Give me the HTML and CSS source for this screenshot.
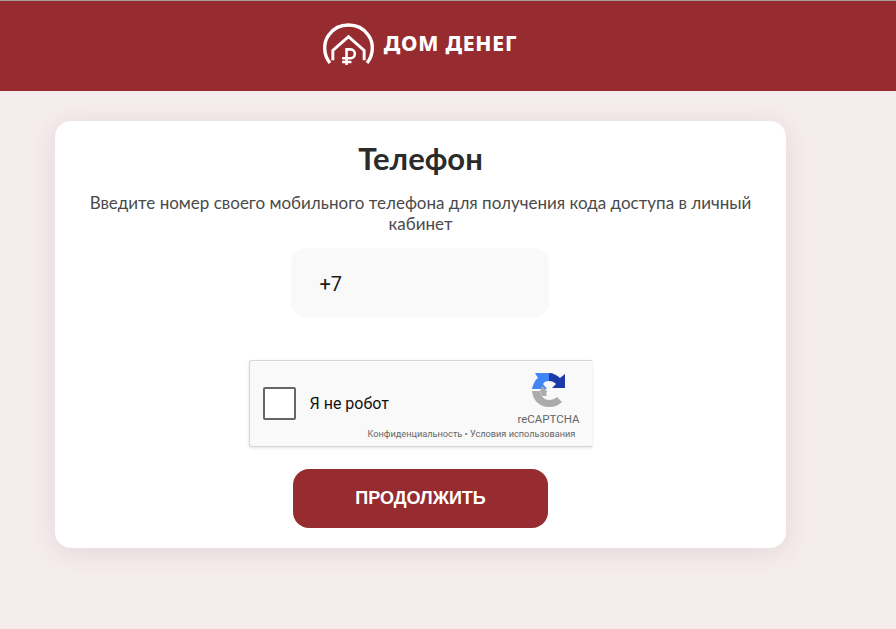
FILE: index.html
```html
<!DOCTYPE html>
<html lang="ru">
<head>
<meta charset="utf-8">
<title>Телефон</title>
<link rel="stylesheet" href="styles.css">
</head>
<body>
<header class="topbar">
  <div class="brand">
    <svg class="brand-icon" viewBox="0 0 50 44" aria-hidden="true">
      <path class="stroke" d="M6 41 C-1 32 -1 20 5 12 C10 5 17 2 25 2 C33 2 40 5 45 12 C51 20 51 32 44 41"/>
      <path class="stroke thin" d="M9 38 V28 L25 14 L41 28 V38"/>
      <path class="stroke ruble" d="M23 43 V27 H27 C33 27 33 36 27 36 H18.500 M18.500 39.800 H28"/>
    </svg>
    <span class="brand-name">ДОМ ДЕНЕГ</span>
  </div>
</header>
<main class="page">
  <section class="card">
    <h1 class="title">Телефон</h1>
    <p class="lead">Введите номер своего мобильного телефона для получения кода доступа в личный кабинет</p>
    <div class="phone"><span>+7</span></div>
    <div class="captcha">
      <span class="check"></span>
      <span class="robot">Я не робот</span>
      <div class="badge">
        <svg viewBox="0 0 34 34" width="34" height="34" aria-hidden="true">
          <path fill="#1c3aa9" d="M17 0 C21 0 25 2 28 5 L33 1 V15 H20 L24 11 C22 9 20 8 17 8 Z"/>
          <path fill="#4285f4" d="M3 0 H17 V8 C14 8 12 9 11 11 L15 16 H0 C1 11 3 7 6 5 Z"/>
          <path fill="#ababab" d="M0 18 H8 C9 24 13 27 17 27 C20 27 23 26 25 24 L30 29 C27 32 22 34 17 34 C8 34 1 28 0 18 Z"/>
          <path fill="#ababab" d="M8 18 L10 13 L15 18 C14 20 14 22 15 23 L10 23 Z"/>
        </svg>
        <span class="badge-name">reCAPTCHA</span>
      </div>
      <div class="terms">Конфиденциальность • Условия использования</div>
    </div>
    <button class="submit" type="button">ПРОДОЛЖИТЬ</button>
  </section>
</main>
</body>
</html>
```
FILE: styles.css
```css
* { box-sizing: border-box; }
html, body { margin: 0; height: 100%; }
body {
  background: #f5eced;
  font-family: "Lato", "Noto Sans", sans-serif;
  color: #2e2e2e;
  overflow: hidden;
}
.topbar {
  height: 91px;
  background: #962c2f;
  border-top: 1px solid #a89a9a;
  display: flex;
  justify-content: center;
  align-items: center;
  padding: 0 55px 4px 0;
}
.brand { display: flex; align-items: center; gap: 11px; }
.brand-icon { width: 49px; height: 43px; overflow: visible; }
.stroke { fill: none; stroke: #fff; stroke-width: 3.500; stroke-linecap: butt; stroke-linejoin: miter; }
.thin { stroke-width: 3; }
.ruble { stroke-width: 2.600; }
.brand-name {
  font-family: "Noto Sans", sans-serif;
  font-size: 21px;
  font-weight: 800;
  color: #fff;
  letter-spacing: 0.8px;
  margin-top: -2px;
}
.page { padding: 30px 0 0 55px; }
.card {
  width: 731px;
  height: 427px;
  background: #fff;
  border-radius: 16px;
  box-shadow: 0 4px 24px rgba(110, 70, 70, 0.12);
  display: flex;
  flex-direction: column;
  align-items: center;
  padding-top: 18px;
}
.title {
  margin: 0;
  font-size: 31px;
  line-height: 38px;
  font-weight: 700;
  color: #2b2b2b;
}
.lead {
  margin: 15px 0 0;
  width: 680px;
  font-size: 17px;
  line-height: 21px;
  text-align: center;
  color: #4a4a4a;
}
.phone {
  margin: 14px 2px 0 0;
  width: 258px;
  height: 70px;
  background: #f9f9f9;
  border-radius: 16px;
  display: flex;
  align-items: center;
  padding: 2px 0 0 29px;
  font-family: "Roboto", sans-serif;
  font-size: 20px;
  color: #1b1b1b;
}
.captcha {
  position: relative;
  margin: 42px 1px 0 0;
  width: 343px;
  height: 87px;
  background: #f9f9f9;
  border: 1px solid #d6d6d6;
  border-right: 0;
  border-radius: 3px 0 0 3px;
  box-shadow: 0 1px 3px rgba(0, 0, 0, 0.12);
  display: flex;
  align-items: center;
  padding: 0 0 0 13px;
  font-family: "Roboto", sans-serif;
}
.check {
  width: 33px;
  height: 33px;
  background: #fff;
  border: 2px solid #666;
  border-radius: 2px;
}
.robot { margin-left: 14px; font-size: 16px; color: #111; }
.badge {
  position: absolute;
  top: 12px;
  right: 11px;
  width: 64px;
  display: flex;
  flex-direction: column;
  align-items: center;
  gap: 6px;
}
.badge-name { font-size: 11.500px; color: #666; line-height: 13px; }
.terms {
  position: absolute;
  left: 118px;
  bottom: 7px;
  font-size: 9.200px;
  line-height: 11px;
  color: #666;
  white-space: nowrap;
}
.submit {
  margin-top: 22px;
  width: 255px;
  height: 59px;
  border: 0;
  border-radius: 16px;
  background: #962c2f;
  color: #fff;
  font-family: "Liberation Sans", sans-serif;
  font-size: 18px;
  font-weight: 700;
}
```
